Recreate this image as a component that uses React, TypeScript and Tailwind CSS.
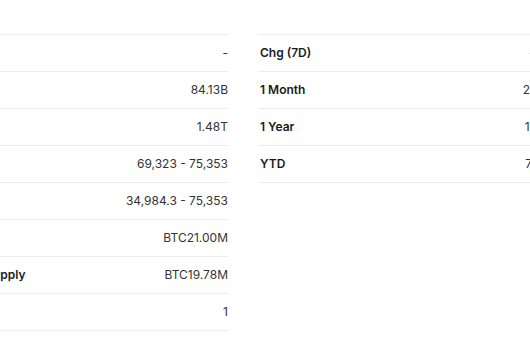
const left = [
	{ label: "Prev. Close", value: "-" },
	{ label: "Volume", value: "84.13B" },
	{ label: "Market Cap", value: "1.48T" },
	{ label: "Day's Range", value: "69,323 - 75,353" },
	{ label: "52 wk Range", value: "34,984.3 - 75,353" },
	{ label: "Max Supply", value: "BTC21.00M" },
	{ label: "Circulating Supply", value: "BTC19.78M" },
	{ label: "Rank", value: "1" },
];

const right = [
	{ label: "Chg (7D)", value: "-", muted: true },
	{ label: "1 Month", value: "20.47%" },
	{ label: "1 Year", value: "142.5%" },
	{ label: "YTD", value: "71.96%" },
];

type Row = { label: string; value: string; muted?: boolean };

const StatTable = ({ rows, pad = "" }: { rows: Row[]; pad?: string }) => (
	<div className="w-[309px] shrink-0 border-t border-[#ececec]">
		{rows.map((row) => (
			<div
				key={row.label}
				className={`flex h-[37px] items-center justify-between border-b border-[#ececec] text-[12px] ${pad}`}
			>
				<span className="whitespace-nowrap font-semibold text-[#1a1a1a]">{row.label}</span>
				<span className={`whitespace-nowrap ${row.muted ? "pr-[33px] text-[#d4d4d4]" : "text-[#333333]"}`}>
					{row.value}
				</span>
			</div>
		))}
	</div>
);

export default function App() {
	return (
		<div
			className="h-[348px] w-[530px] overflow-hidden bg-white pt-[34px]"
			style={{ fontFamily: "Inter, 'Noto Sans', sans-serif" }}
		>
			<div className="ml-[-81px] flex items-start gap-[30px]">
				<StatTable rows={left} />
				<StatTable rows={right} pad="pl-[2px]" />
			</div>
		</div>
	);
}
